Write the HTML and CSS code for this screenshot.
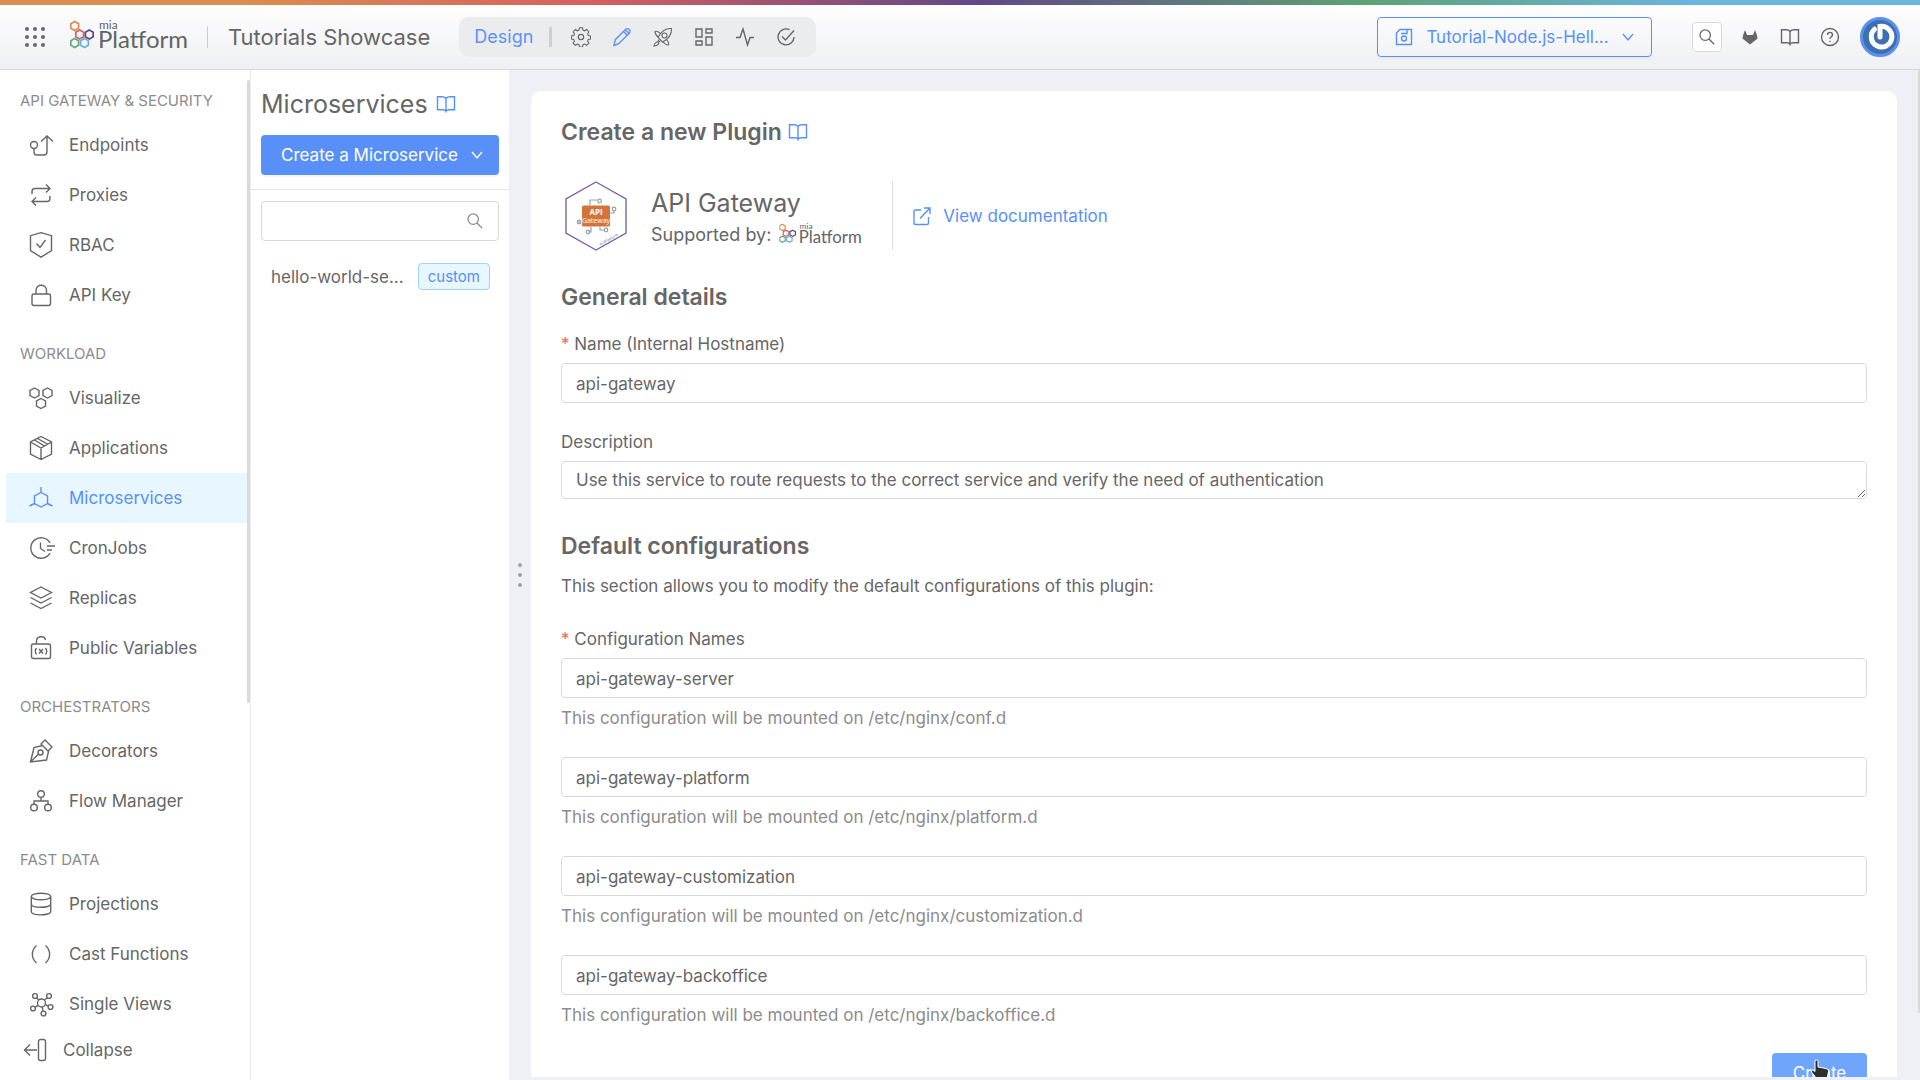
FILE: index.html
```html
<!DOCTYPE html>
<html lang="en">
<head>
<meta charset="utf-8">
<title>Microservices - Tutorials Showcase</title>
<link rel="stylesheet" href="styles.css">
</head>
<body>
<svg class="defs" aria-hidden="true">
  <symbol id="cells" viewBox="0 0 24 29">
    <g fill="none" stroke-width="1.700">
      <path stroke="#db8b4e" d="M4.700 1.600l3.900 2.200v4.500l-3.900 2.200-3.900-2.200v-4.500z"/>
      <path stroke="#d2605f" d="M9.700 10.100l3.900 2.200v4.500l-3.900 2.200-3.900-2.200v-4.500z"/>
      <path stroke="#5d4586" d="M19.300 10.100l3.900 2.200v4.500l-3.900 2.200-3.900-2.200v-4.500z"/>
      <path stroke="#68a578" d="M4.700 18.600l3.900 2.200v4.500l-3.900 2.200-3.900-2.200v-4.500z"/>
      <path stroke="#6ab1dc" d="M14.500 18.600l3.900 2.200v4.500l-3.900 2.200-3.900-2.200v-4.500z"/>
    </g>
  </symbol>
  <symbol id="book" viewBox="0 0 20 20"><path d="M10 4.500C9 3 7.500 2.700 6 2.700H1.500v13H7c1.500 0 2.500.5 3 1.500.5-1 1.500-1.500 3-1.500h5.500v-13H14c-1.500 0-3 .3-4 1.800zM10 4.500V18.500"/></symbol>
  <symbol id="search" viewBox="0 0 20 20"><circle cx="8" cy="8" r="5.800"/><path d="M12.200 12.200l5.800 5.800"/></symbol>
  <symbol id="chevron" viewBox="0 0 12 12"><path d="M1 3l5 6 5-6"/></symbol>
</svg>

<header class="topbar">
  <button class="plain apps" aria-label="Applications">
    <svg width="22" height="22" viewBox="0 0 22 22" class="solid"><circle cx="3" cy="3" r="2"/><circle cx="11" cy="3" r="2"/><circle cx="19" cy="3" r="2"/><circle cx="3" cy="11" r="2"/><circle cx="11" cy="11" r="2"/><circle cx="19" cy="11" r="2"/><circle cx="3" cy="19" r="2"/><circle cx="11" cy="19" r="2"/><circle cx="19" cy="19" r="2"/></svg>
  </button>
  <svg class="logo" width="118" height="40" viewBox="0 -3 118 40">
    <use href="#cells" width="24" height="29"/>
    <text x="29" y="9" class="logo-small">mia</text>
    <text x="28" y="28" class="logo-big">Platform</text>
  </svg>
  <span class="rule"></span>
  <span class="project">Tutorials Showcase</span>
  <nav class="areas">
    <a href="#" class="area-name">Design</a>
    <span class="area-rule"></span>
    <a href="#" aria-label="Settings"><svg width="20" height="20" viewBox="0 0 24 24"><circle cx="12" cy="12" r="3.200"/><path d="M10 1.500h4l.6 3 2.200.9 2.600-1.700 2.900 2.900-1.700 2.600.9 2.200 3 .6v4l-3 .6-.9 2.200 1.700 2.600-2.900 2.900-2.600-1.700-2.200.9-.6 3h-4l-.6-3-2.200-.9-2.600 1.700-2.900-2.900 1.700-2.600-.9-2.200-3-.6v-4l3-.6.9-2.200-1.700-2.600 2.900-2.900 2.600 1.700 2.200-.9z" transform="matrix(.92 0 0 .92 .96 -.4)"/></svg></a>
    <a href="#" class="active" aria-label="Design"><svg width="20" height="20" viewBox="0 0 20 20"><path d="M2 18.500l1.300-5.800L13.500 2.500c1.200-1.200 2.700-1 3.700 0s1.200 2.500 0 3.700L7 16.500zM11.500 4.500l4 4M13.300 2.700l4 4"/></svg></a>
    <a href="#" aria-label="Deploy"><svg width="20" height="20" viewBox="0 0 20 20" class="fine"><path d="M18.500 1.500c-6-.3-10.500 3-13.500 9l4.500 4.500c6-3 9.300-7.500 9-13.500z"/><circle cx="11.500" cy="8.500" r="2.500"/><path d="M7.500 6.500C5 4.500 3 4 2 4.500c0 3 1 4 3.200 5.500M13.500 12.500c2 2.500 2.500 4.500 2 5.500-3 0-4-1-5.500-3.200M5 13l2 2M5.500 15.500c-1-1.500-4 0-4.500 3.500 3.500-.5 5.500-2 4.500-3.500z"/></svg></a>
    <a href="#" aria-label="Dashboards"><svg width="20" height="20" viewBox="0 0 20 20"><path d="M2 2h6v8H2zM12 2h6v4h-6zM2 14h6v4H2zM12 10h6v8h-6z"/></svg></a>
    <a href="#" aria-label="Monitoring"><svg width="20" height="20" viewBox="0 0 20 20"><path d="M1 10.500h4L8 2l4.500 16 2.500-7.500h4"/></svg></a>
    <a href="#" aria-label="Checks"><svg width="20" height="20" viewBox="0 0 20 20"><path d="M13.500 2.700A8 8 0 1 0 18 10M6 9.500l3.500 3.500L18 3.500"/></svg></a>
  </nav>
  <div class="tools">
    <button class="branch">
      <svg width="18" height="18" viewBox="0 0 18 18"><path d="M5 1.500h11.500v15h-15V5zM12 1.500v4H6"/><circle cx="9" cy="10.500" r="2.500"/></svg>
      <span>Tutorial-Node.js-Hell...</span>
      <svg width="12" height="12"><use href="#chevron"/></svg>
    </button>
    <button class="search-button" aria-label="Search"><svg width="18" height="18"><use href="#search"/></svg></button>
    <a href="#" aria-label="Repository"><svg width="20" height="20" viewBox="0 0 20 20" class="solid"><path d="M5 3L3 8.500l-.5 3L10 17.500l7.500-6-.5-3L15 3l-2 5H7z"/></svg></a>
    <a href="#" aria-label="Documentation"><svg width="20" height="20"><use href="#book"/></svg></a>
    <a href="#" aria-label="Help"><svg width="20" height="20" viewBox="0 0 20 20"><circle cx="10" cy="10" r="8.500"/><path d="M7.500 8c0-3.500 5-3.500 5 0 0 1.800-2.500 1.800-2.500 4M10 13.700v1.300"/></svg></a>
    <button class="plain" aria-label="Account">
      <svg width="40" height="40" viewBox="0 0 40 40" class="avatar"><circle cx="20" cy="20" r="18.500" fill="#3d70ad" stroke="#5890f5" stroke-width="3"/><path d="M14.500 12.200A10.300 10.300 0 1 0 20 9.500V20" fill="none" stroke="#fff" stroke-width="5" stroke-linecap="round"/></svg>
    </button>
  </div>
</header>

<div class="shell">
  <aside class="sidebar">
    <nav class="menu">
      <section>
        <h2>API GATEWAY &amp; SECURITY</h2>
        <a href="#"><svg viewBox="0 0 26 26"><circle cx="6" cy="13" r="3.500"/><path d="M6 16.500V20c0 2 .7 3 3 3h7c2 0 3-1 3-3V4M13 9.500L19 4l6 5.500"/></svg>Endpoints</a>
        <a href="#"><svg viewBox="0 0 26 26"><path d="M4 12V9.500C4 7.500 5 6.500 7 6.500h15M18 2.500l4 4-4 4M22 14v2.500c0 2-1 3-3 3H4M8 15.500l-4 4 4 4"/></svg>Proxies</a>
        <a href="#"><svg viewBox="0 0 26 26"><path d="M13 .7l10.500 3V18.500L13 25.200 2.500 18.500V3.700zM8.500 11.500l3.500 4L17.500 8"/></svg>RBAC</a>
        <a href="#"><svg viewBox="0 0 26 26"><rect x="4" y="12" width="18.500" height="11.500" rx="2"/><path d="M8 12V8.500c0-7 10.500-7 10.500 0V12"/></svg>API Key</a>
      </section>
      <section>
        <h2>WORKLOAD</h2>
        <a href="#"><svg viewBox="0 0 26 26"><path d="M6.500 3l4.500 2.500v5L6.500 13 2 10.500v-5zM19.500 3L24 5.500v5L19.500 13 15 10.500v-5zM13 13.500l4.500 2.500v5L13 23.500 8.500 21v-5z"/></svg>Visualize</a>
        <a href="#"><svg viewBox="0 0 26 26"><path d="M13 1.500l10.500 5.500v12L13 24.500 2.500 19V7zM2.500 7L13 13l10.500-6M13 13v11.500M6.500 5L16.500 11l3-2L9.500 3.500"/></svg>Applications</a>
        <a href="#" class="current" aria-current="page"><svg viewBox="0 0 26 26"><path d="M13 7.500l6.500 3.500v7.500L13 22l-6.500-3.500V11zM13 7.500V2M6.500 18.500l-5 2.500M19.500 18.500l5 2.500"/></svg>Microservices</a>
        <a href="#"><svg viewBox="0 0 26 26"><path d="M22 7.800A10.300 10.300 0 1 0 22 18.200M12.500 7.500v6l4.500 3M19 11h8M19 15h5"/></svg>CronJobs</a>
        <a href="#"><svg viewBox="0 0 26 26"><path d="M13 2l10.500 5.500L13 13 2.500 7.500zM2.500 12.500L13 18l10.500-5.500M2.500 18L13 23.500 23.500 18"/></svg>Replicas</a>
        <a href="#"><svg viewBox="0 0 26 26"><rect x="3.500" y="9" width="19" height="14.500" rx="2"/><path d="M8.500 9V6c0-5 8-6 9-1M8.500 13c-1.500 2-1.500 4.500 0 6.500M17.500 13c1.500 2 1.500 4.500 0 6.500M11 14l4 4.500M15 14l-4 4.500"/></svg>Public Variables</a>
      </section>
      <section>
        <h2>ORCHESTRATORS</h2>
        <a href="#"><svg viewBox="0 0 26 26"><path d="M2.500 24L6 9.500l8.500-2 6 6-2 8.500zM13 6l4-4 7 7-4 4zM2.500 24l8-8"/><circle cx="12.500" cy="14.500" r="2.500"/></svg>Decorators</a>
        <a href="#"><svg viewBox="0 0 26 26"><circle cx="13" cy="6" r="3.300"/><circle cx="6" cy="19.500" r="3.300"/><circle cx="20" cy="19.500" r="3.300"/><path d="M13 9.300V13M6 16.200V13h14v3.200"/></svg>Flow Manager</a>
      </section>
      <section>
        <h2>FAST DATA</h2>
        <a href="#"><svg viewBox="0 0 26 26"><ellipse cx="13" cy="5.500" rx="9.700" ry="3.300"/><path d="M3.300 5.500v15c0 4.500 19.400 4.500 19.400 0v-15M3.300 13c0 4.400 19.400 4.400 19.400 0"/></svg>Projections</a>
        <a href="#"><svg viewBox="0 0 26 26"><path d="M8.500 4.500c-5.500 5-5.500 12.500 0 17.500M17.500 4.500c5.500 5 5.500 12.500 0 17.500"/></svg>Cast Functions</a>
        <a href="#"><svg viewBox="0 0 26 26"><circle cx="13.500" cy="12" r="4"/><circle cx="7" cy="5" r="2.400"/><circle cx="21" cy="5" r="2.400"/><circle cx="5" cy="17.500" r="2.400"/><circle cx="22.500" cy="16" r="2.400"/><circle cx="15.500" cy="22.500" r="2.400"/><path d="M8.600 6.800l2.200 2.200M19.200 6.700l-2.700 2.400M7 16.300l3-2M20.200 15l-3-1.400M15 20.200l-.7-4.200"/></svg>Single Views</a>
      </section>
    </nav>
    <button class="collapse"><svg width="24" height="24" viewBox="0 0 24 24"><rect x="15.500" y="1.500" width="7" height="21" rx="2"/><path d="M14 12H1.500M7 6.500L1.500 12 7 17.500"/></svg>Collapse</button>
    <span class="scrollbar"></span>
  </aside>

  <section class="list">
    <div class="list-head">
      <h1>Microservices <a href="#" aria-label="Documentation"><svg width="20" height="20"><use href="#book"/></svg></a></h1>
      <button class="primary"><span>Create a Microservice</span><svg width="12" height="12"><use href="#chevron"/></svg></button>
    </div>
    <label class="filter"><input type="text" aria-label="Search microservices"><svg width="18" height="18"><use href="#search"/></svg></label>
    <a href="#" class="service"><span>hello-world-se...</span><span class="tag">custom</span></a>
  </section>

  <div class="resizer"><i></i><i></i><i></i></div>

  <main class="content">
    <form class="card">
      <h2>Create a new Plugin <a href="#" aria-label="Documentation"><svg width="20" height="20"><use href="#book"/></svg></a></h2>
      <div class="plugin">
        <svg width="70" height="70" viewBox="0 0 70 70" class="badge">
          <path d="M35 1l30 17v34L35 69 5 52V18z" stroke="#7765a3" stroke-width="1.400"/>
          <g stroke="#8fa3b5" stroke-width="1.200"><path d="M29 24v-5h7M49 32h4v-3M20 42h-2v-3M30 46v5h-3M39 46v3h4"/><circle cx="38.500" cy="20" r="1.800"/><circle cx="53" cy="28" r="1.800"/><circle cx="18" cy="41" r="1.800"/><circle cx="27" cy="51" r="1.800"/><circle cx="45" cy="49" r="1.800"/></g>
          <rect x="21" y="24.500" width="28" height="21" rx="1.500" fill="#d5743a" stroke="none"/>
          <text x="35" y="34" class="badge-title">API</text>
          <text x="35" y="42" class="badge-sub">Gateway</text>
          <text x="39" y="65" class="badge-brand" transform="rotate(-30 39 65)">miaPlatform</text>
        </svg>
        <div class="plugin-info">
          <div class="plugin-name">API Gateway</div>
          <div class="plugin-by">Supported by:
            <svg width="83" height="28" viewBox="0 -3 118 40">
              <use href="#cells" width="24" height="29"/>
              <text x="29" y="9" class="logo-small">mia</text>
              <text x="28" y="28" class="logo-big">Platform</text>
            </svg>
          </div>
        </div>
        <a href="#" class="doc-link"><svg width="20" height="20" viewBox="0 0 20 20"><path d="M9 4H3.500c-1 0-1.500.5-1.500 1.500V17c0 1 .5 1.500 1.500 1.500H15c1 0 1.500-.5 1.500-1.500v-6M12 2h6v6M18 2L8 12.500"/></svg>View documentation</a>
      </div>
      <h2 class="section-title">General details</h2>
      <div class="field">
        <label for="name"><b>*</b> Name (Internal Hostname)</label>
        <input id="name" type="text" value="api-gateway">
      </div>
      <div class="field">
        <label for="description">Description</label>
        <textarea id="description" rows="1">Use this service to route requests to the correct service and verify the need of authentication</textarea>
      </div>
      <h2 class="section-title">Default configurations</h2>
      <p class="intro">This section allows you to modify the default configurations of this plugin:</p>
      <div class="field config">
        <label for="config1"><b>*</b> Configuration Names</label>
        <input id="config1" type="text" value="api-gateway-server">
        <p class="help">This configuration will be mounted on /etc/nginx/conf.d</p>
      </div>
      <div class="field config">
        <input type="text" aria-label="Platform configuration" value="api-gateway-platform">
        <p class="help">This configuration will be mounted on /etc/nginx/platform.d</p>
      </div>
      <div class="field config">
        <input type="text" aria-label="Customization configuration" value="api-gateway-customization">
        <p class="help">This configuration will be mounted on /etc/nginx/customization.d</p>
      </div>
      <div class="field config">
        <input type="text" aria-label="Backoffice configuration" value="api-gateway-backoffice">
        <p class="help">This configuration will be mounted on /etc/nginx/backoffice.d</p>
      </div>
      <div class="actions">
        <button type="submit" class="primary create">Create
          <svg class="pointer" width="20" height="24" viewBox="0 0 20 24"><path d="M5 2c0-1.500 3-1.500 3 0v6l8 1.500c2 .5 2.500 1.500 2.500 3L17 20H7l-5.500-7c-.7-1.500 1-2.500 2.500-1.300L5 12.500z" fill="#2e2e2e" stroke="#fff"/></svg>
        </button>
      </div>
    </form>
    <span class="scrollbar"></span>
  </main>
</div>
</body>
</html>
```
FILE: styles.css
```css
* { box-sizing: border-box; }

body {
  margin: 0;
  height: 100vh;
  display: flex;
  flex-direction: column;
  overflow: hidden;
  font: 17px/24px Inter, "Liberation Sans", sans-serif;
  color: #666;
  background: #eff0f5;
}

h1, h2, p { margin: 0; }
a { color: inherit; text-decoration: none; }
button, input, textarea { font: inherit; color: inherit; }
button { cursor: pointer; }

svg {
  display: block;
  flex: none;
  fill: none;
  stroke: currentColor;
  stroke-width: 1.4;
}

.defs { position: absolute; width: 0; height: 0; }
.solid { fill: currentColor; stroke: none; }
.fine { stroke-width: 1.1; }
.plain { padding: 0; border: 0; background: none; }

.logo-small, .logo-big { font-family: Lato, sans-serif; fill: #636466; stroke: none; }
.logo-small { font-size: 12px; }
.logo-big { font-size: 24px; }

/* Top bar */
.topbar {
  position: relative;
  flex: none;
  display: flex;
  align-items: center;
  height: 70px;
  padding: 5px 20px 0 24px;
  border-bottom: 1px solid #d5d6d9;
  background: linear-gradient(#fff, #eff0f3);
}

.topbar::before {
  content: "";
  position: absolute;
  inset: 0 0 auto;
  height: 5px;
  background: linear-gradient(90deg, #db8d50 13%, #d45f60 31%, #614886 51%, #5ea275 71%, #6ab4dd 88%);
}

.logo { margin-left: 24px; }
.rule { width: 1px; height: 22px; margin: 0 20px 0 19px; background: #ccc; }
.project { font-size: 22px; }

.areas {
  display: flex;
  align-items: center;
  gap: 21px;
  height: 40px;
  margin-left: 29px;
  padding: 0 20px 0 15px;
  border-radius: 10px;
  background: #ebecee;
}

.area-name, .areas .active { color: #5c92f8; }
.area-name { margin-right: -5px; font-size: 18px; }
.area-rule { width: 3px; height: 20px; margin-right: -2px; background: #d0d0d0; }

.tools { display: flex; align-items: center; gap: 20px; margin-left: auto; }

.branch {
  display: flex;
  align-items: center;
  justify-content: space-between;
  width: 275px;
  height: 40px;
  margin-right: 20px;
  padding: 0 17px;
  border: 1px solid #5890f8;
  border-radius: 4px;
  background: transparent;
  color: #5890f8;
  box-shadow: 0 2px 2px #0000000a;
}

.search-button {
  display: grid;
  place-items: center;
  width: 30px;
  height: 30px;
  margin-right: -2px;
  padding: 0;
  border: 1px solid #d9d9d9;
  border-radius: 4px;
  background: #fff;
}

/* Three panes under the bar */
.shell {
  flex: 1;
  min-height: 0;
  display: grid;
  grid-template-columns: 251px 258px 22px minmax(0, 1fr);
}

.sidebar, .list { background: #fff; }

.sidebar {
  position: relative;
  display: flex;
  flex-direction: column;
  min-height: 0;
  border-right: 1px solid #ededed;
}

.menu {
  flex: 1;
  min-height: 0;
  overflow: hidden;
  display: flex;
  flex-direction: column;
  gap: 3px;
}

.menu section { flex: none; }

.menu h2 {
  padding: 20px 20px 8px;
  font-size: 15px;
  line-height: 22px;
  font-weight: 400;
  color: #8c8c8c;
}

.menu a {
  display: flex;
  align-items: center;
  gap: 15px;
  height: 50px;
  margin: 0 3px 0 6px;
  padding-left: 22px;
}

.menu svg { width: 26px; height: 26px; overflow: visible; }
.menu .current { background: #e8f6ff; color: #5890f8; }

.collapse {
  flex: none;
  display: flex;
  align-items: center;
  gap: 16px;
  height: 50px;
  padding: 0 23px 10px;
  border: 0;
  background: none;
}

.scrollbar {
  position: absolute;
  top: 10px;
  right: 0;
  width: 3px;
  height: 623px;
  border-radius: 2px;
  background: #d9d9d9;
}

/* Microservice list */
.list-head { padding: 18px 10px 14px; border-bottom: 1px solid #e6e6e6; }

.list h1 {
  display: flex;
  align-items: center;
  gap: 8px;
  font-size: 25px;
  line-height: 32px;
  font-weight: 400;
}

.list h1 a, .card h2 a { color: #5890f8; }

.primary {
  border: 0;
  border-radius: 4px;
  background: #5890f8;
  color: #fff;
}

.list .primary {
  display: flex;
  align-items: center;
  justify-content: space-between;
  width: 100%;
  height: 40px;
  margin-top: 15px;
  padding: 0 16px 0 20px;
  box-shadow: 0 2px 2px #0000000a;
}

.filter {
  display: flex;
  align-items: center;
  height: 40px;
  margin: 11px 10px 22px;
  padding-right: 14px;
  border: 1px solid #d9d9d9;
  border-radius: 4px;
  color: #8c8c8c;
}

.filter input { flex: 1; min-width: 0; border: 0; outline: 0; background: none; }

.service {
  display: flex;
  align-items: center;
  justify-content: space-between;
  padding: 0 19px 0 20px;
}

.tag {
  padding: 0 9px;
  border: 1px solid #9fd2fb;
  border-radius: 4px;
  background: #e8f6ff;
  color: #5890f8;
  font-size: 15px;
  line-height: 25px;
}

.resizer {
  display: flex;
  flex-direction: column;
  align-items: center;
  justify-content: center;
  gap: 6px;
}

.resizer i { width: 4px; height: 4px; border-radius: 2px; background: #a0a0a4; }

/* Plugin form */
.content {
  position: relative;
  display: flex;
  min-height: 0;
  overflow: hidden;
  padding: 21px 23px 3px 0;
}

.content .scrollbar { top: 0; width: 2px; height: 943px; }

.card {
  flex: 1;
  min-width: 0;
  overflow: hidden;
  padding: 25px 30px;
  border-radius: 10px 10px 0 0;
  background: #fff;
}

.card h2 {
  display: flex;
  align-items: center;
  gap: 6px;
  font-size: 23px;
  line-height: 32px;
  font-weight: 600;
}

.plugin { display: flex; height: 69px; margin-top: 33px; }
.badge text { stroke: none; text-anchor: middle; fill: #fff; }
.badge .badge-title { font: 700 8px "Open Sans", sans-serif; }
.badge .badge-sub { font: 7px "Open Sans", sans-serif; }
.badge .badge-brand { font: 4px Lato, sans-serif; fill: #777; text-anchor: start; }

.plugin-info { padding: 6px 30px 0 20px; border-right: 1px solid #e0e0e0; }
.plugin-name { font-size: 25px; line-height: 32px; }
.plugin-by { display: flex; align-items: center; gap: 8px; font-size: 18px; line-height: 32px; }

.doc-link {
  display: flex;
  align-items: center;
  gap: 11px;
  margin-left: 19px;
}

.doc-link { color: #5890f8; }

.card .section-title { margin-top: 31px; }
.field { margin-top: 27px; }
.section-title + .field { margin-top: 19px; }
.intro + .field { margin-top: 29px; }
.field label { display: block; margin-bottom: 7px; }
.field b { font-weight: 400; color: #f0625f; }

.field input, .field textarea {
  display: block;
  width: 100%;
  height: 40px;
  padding: 1px 14px 0;
  border: 1px solid #d9d9d9;
  border-radius: 4px;
  background: #fff;
  outline: 0;
}

.field textarea { height: 38px; padding-top: 6px; overflow: hidden; resize: vertical; }

.intro { margin-top: 12px; }
.help { margin-top: 8px; color: #8c8c8c; }

.actions { display: flex; justify-content: flex-end; margin-top: 26px; }
.create { position: relative; width: 95px; height: 40px; padding: 0; background: #6fa6fb; }
.pointer { position: absolute; left: 38px; top: 6px; stroke-width: 1; }
```
